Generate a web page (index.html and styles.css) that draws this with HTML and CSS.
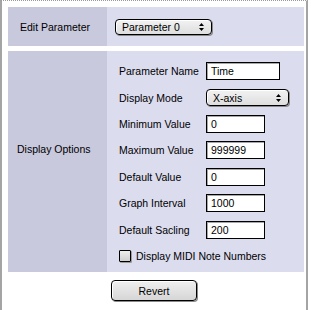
FILE: index.html
```html
<!DOCTYPE html>
<html>
<head>
<meta charset="utf-8">
<link rel="stylesheet" href="styles.css">
</head>
<body>
<div class="window">
  <div class="table">
    <div class="cell label first">Edit Parameter</div>
    <div class="cell value first">
      <div class="popup popup-param">
        <span class="popup-text">Parameter 0</span>
        <svg class="arrows" width="5" height="8" viewBox="0 0 5 8"><path d="M2.5 0 L5 3 L0 3 Z M0 5 L5 5 L2.5 8 Z" fill="#000"/></svg>
      </div>
    </div>
    <div class="cell label second">Display Options</div>
    <div class="cell value second">
      <div class="form">
        <div class="flabel">Parameter Name</div>
        <div class="field field-name">Time</div>
        <div class="flabel">Display Mode</div>
        <div class="popup popup-mode">
          <span class="popup-text">X-axis</span>
          <svg class="arrows" width="5" height="8" viewBox="0 0 5 8"><path d="M2.5 0 L5 3 L0 3 Z M0 5 L5 5 L2.5 8 Z" fill="#000"/></svg>
        </div>
        <div class="flabel">Minimum Value</div>
        <div class="field">0</div>
        <div class="flabel">Maximum Value</div>
        <div class="field">999999</div>
        <div class="flabel">Default Value</div>
        <div class="field">0</div>
        <div class="flabel">Graph Interval</div>
        <div class="field">1000</div>
        <div class="flabel">Default Sacling</div>
        <div class="field">200</div>
        <div class="check-row">
          <span class="checkbox"></span>
          <span>Display MIDI Note Numbers</span>
        </div>
      </div>
    </div>
  </div>
  <div class="actions">
    <div class="button">Revert</div>
  </div>
</div>
</body>
</html>
```

FILE: styles.css
```css
html, body {
  margin: 0;
  padding: 0;
  background: #ffffff;
}

body {
  font-family: "Liberation Sans", Arial, sans-serif;
  font-size: 10.5px;
  color: #000;
}

.window {
  width: 304px;
  height: 306px;
  border-left: 2px solid #a4a4a4;
  border-right: 2px solid #a4a4a4;
  border-top: 1px dotted #9a9a9a;
  border-bottom: 2px dotted #444;
  background: #fff;
  padding: 6px 0 0 6px;
  box-sizing: content-box;
  width: 298px;
}

.table {
  display: grid;
  grid-template-columns: 99px 197px;
  grid-template-rows: 39px 221px;
  row-gap: 5px;
}

.cell {
  display: flex;
  align-items: center;
}

.label {
  background: #c9c9dd;
}

.value {
  background: #dcdcef;
}

.label.first {
  padding-left: 12px;
}

.label.second {
  padding-left: 9px;
  padding-bottom: 26px;
}

.value.first {
  padding-left: 8px;
}

.value.second {
  align-items: flex-start;
  padding-left: 12px;
  padding-top: 7px;
}

.popup {
  display: flex;
  align-items: center;
  justify-content: space-between;
  box-sizing: border-box;
  border: 1px solid #000;
  border-radius: 4px;
  background: linear-gradient(#f2f2f2, #dedede);
  box-shadow: 1px 1px 0 #8a8a8a, inset 1px 1px 0 #fff;
  padding: 0 7px 0 6px;
}

.popup-param {
  width: 97px;
  height: 16px;
}

.popup-mode {
  width: 83px;
  height: 17px;
}

.arrows {
  display: block;
}

.form {
  display: grid;
  grid-template-columns: 87px auto;
  grid-auto-rows: 26.4px;
  align-items: center;
}

.field {
  box-sizing: border-box;
  height: 18px;
  width: 59px;
  border: 1px solid #000;
  background: #fff;
  box-shadow: inset 1px 1px 0 #a8a8a8;
  padding: 1px 0 0 4px;
  line-height: 15px;
}

.field-name {
  width: 74px;
}

.check-row {
  grid-column: 1 / 3;
  display: flex;
  align-items: center;
  gap: 5px;
  padding-left: 0;
}

.checkbox {
  box-sizing: border-box;
  width: 12px;
  height: 12px;
  border: 1px solid #000;
  border-radius: 1px;
  background: linear-gradient(#eeeeee, #cfcfcf);
  box-shadow: 1px 1px 0 #9a9a9a;
}

.actions {
  display: flex;
  padding: 8px 0 0 103px;
}

.button {
  box-sizing: border-box;
  width: 86px;
  height: 21px;
  border: 1px solid #000;
  border-radius: 4px;
  background: linear-gradient(#efefef, #d6d6d6);
  box-shadow: 1px 1px 0 #8a8a8a, inset 1px 1px 0 #fff;
  display: flex;
  align-items: center;
  justify-content: center;
}
```
